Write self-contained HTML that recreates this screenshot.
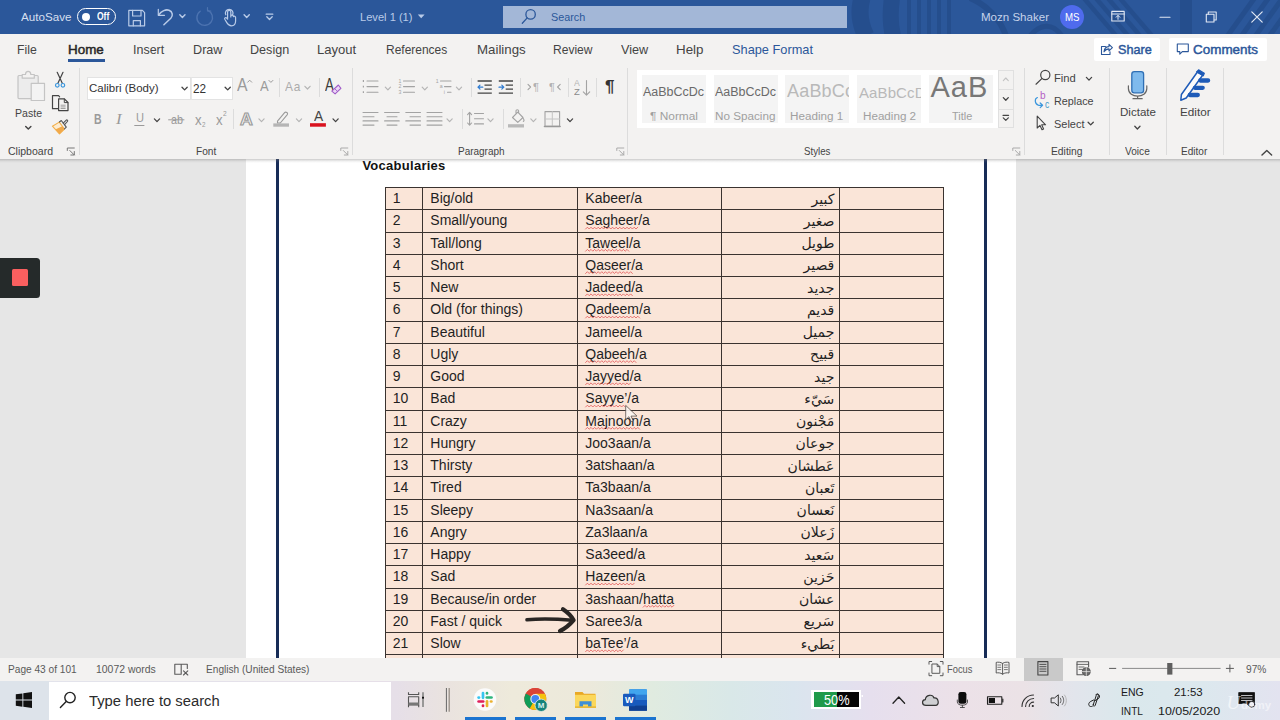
<!DOCTYPE html>
<html lang="en">
<head>
<meta charset="utf-8">
<title>Level 1 (1) - Word</title>
<style>
*{box-sizing:border-box;margin:0;padding:0}
html,body{width:1280px;height:720px;overflow:hidden;background:#e6e6e6;font-family:"Liberation Sans",sans-serif;color:#333}
.abs{position:absolute}
.t{position:absolute;white-space:nowrap;transform-origin:0 50%;display:block}
#titlebar{position:absolute;left:0;top:0;width:1280px;height:34px;background:#2b579a;overflow:hidden}
#tabs{position:absolute;left:0;top:34px;width:1280px;height:32px;background:#f3f2f1}
#ribbon{position:absolute;left:0;top:66px;width:1280px;height:93px;background:#f3f2f1}
#ribshadow{position:absolute;left:0;top:158.5px;width:1280px;height:4px;background:linear-gradient(rgba(120,120,120,.38),rgba(140,140,140,.12) 55%,rgba(160,160,160,0));z-index:3}
#doc{position:absolute;left:0;top:159px;width:1280px;height:499px;background:#e6e6e6;overflow:hidden}
#page{position:absolute;left:246px;top:0;width:770px;height:499px;background:#fff}
#status{position:absolute;left:0;top:658px;width:1280px;height:23px;background:#f3f2f1}
#taskbar{position:absolute;left:0;top:680.5px;width:1280px;height:39.5px;background:linear-gradient(90deg,#e2e4ec 0%,#e6dfe8 31%,#eae3df 35%,#eeeadb 40%,#ece9db 46%,#e0ebe0 51%,#d9e8e8 57%,#dae5ee 62%,#e6dfee 68%,#ece1e8 75%,#ebe2e6 80%,#e2e5ec 84%,#dae8ec 88%,#dce8ee 94%,#e3e3f0 100%)}
.box{position:absolute;background:#fff}
.sty{position:absolute;top:75px;width:64px;height:48px;background:#f4f4f4;overflow:hidden}
.sep{position:absolute;width:1px;background:#dcdcdc}
table{position:absolute;left:138.8px;top:28px;border-collapse:collapse;font-size:14px;color:#1f1f1f;table-layout:fixed}
td{border:1px solid #3a3330;background:#fae5d8;height:22.25px;padding:0 0 1px 7px;white-space:nowrap;overflow:hidden;line-height:20px}
td.ar{font-family:"Liberation Sans","DejaVu Sans",sans-serif;direction:rtl;text-align:right;padding:0 5px 0 0;font-size:14px}
.sq{display:inline}
#ico{position:absolute;left:0;top:0;width:1280px;height:720px;z-index:5;pointer-events:none}
#texts{position:absolute;left:0;top:0;width:1280px;height:720px;z-index:4}
</style>
</head>
<body>
<div id="titlebar">
<svg class="abs" style="left:840px;top:0" width="440" height="34" viewBox="840 0 440 34">
<g fill="none" stroke="#254d8b" opacity=".85">
<path d="M862 -2 C858 12 860 24 866 36" stroke-width="17"/>
<path d="M892 -2 C890 12 890 24 893 36" stroke-width="16"/>
<path d="M909 -2 V36 M919 -2 V36 M929 -2 V36 M939 -2 V36 M949 -2 V36" stroke-width="4"/>
<path d="M970 -2 C985 4 1000 18 1006 36" stroke-width="6"/>
<path d="M1030 36 C1040 24 1052 22 1062 36" stroke-width="5"/>
<path d="M1082 -4 L1118 38 M1094 -4 L1130 38 M1106 -4 L1142 38 M1118 -4 L1154 38" stroke-width="4.500"/>
<path d="M1186 -2 V36" stroke-width="12"/>
<path d="M1226 38 L1256 -4 M1240 38 L1270 -4 M1254 38 L1284 -4 M1268 38 L1298 -4" stroke-width="5"/>
</g>
</svg>
<div class="abs" style="left:502.5px;top:6px;width:344.5px;height:22px;background:#a3b7d7"></div>
<div class="abs" style="left:1060px;top:5px;width:24px;height:24px;border-radius:12px;background:#4f6bed"></div>
<div class="abs" style="left:77px;top:8px;width:38.5px;height:17px;border-radius:9px;border:1.3px solid #fff"></div>
<div class="abs" style="left:81.5px;top:12.5px;width:8px;height:8px;border-radius:4px;background:#fff"></div>
</div>
<div id="tabs">
<div class="abs" style="left:67.5px;top:24.7px;width:37.5px;height:3px;background:#2b579a"></div>
<div class="box" style="left:1094px;top:3.5px;width:66px;height:23px;border-radius:2px"></div>
<div class="box" style="left:1169px;top:3.5px;width:98px;height:23px;border-radius:2px"></div>
</div>
<div id="ribbon"></div>
<!-- ribbon boxes in page coordinates -->
<div class="box" style="left:86.5px;top:76.5px;width:104px;height:23px;border:1px solid #e3e3e3"></div>
<div class="box" style="left:190.5px;top:76.5px;width:42.5px;height:23px;border:1px solid #e3e3e3;border-left:1px solid #e8e8e8"></div>
<div class="box" style="left:636.5px;top:69.5px;width:361.5px;height:58.5px"></div>
<div class="sty" style="left:642px"></div>
<div class="sty" style="left:713.5px"></div>
<div class="sty" style="left:785px"><span class="abs" style="left:2px;top:6px;font-size:18px;color:#b9b9b9;white-space:nowrap;letter-spacing:.2px">AaBbCcD</span></div>
<div class="sty" style="left:857px"><span class="abs" style="left:2px;top:8.6px;font-size:15px;color:#b9b9b9;white-space:nowrap;letter-spacing:.1px">AaBbCcDd</span></div>
<div class="sty" style="left:929px"><span class="abs" style="left:1.5px;top:-4.2px;font-size:29px;color:#777;white-space:nowrap;letter-spacing:1px">AaB</span></div>
<div class="abs" style="left:998px;top:69.5px;width:15.5px;height:58.5px;background:#f3f2f1;border:1px solid #e0e0e0"></div>
<div class="abs" style="left:998px;top:89px;width:15.5px;height:1px;background:#e0e0e0"></div>
<div class="abs" style="left:998px;top:108.5px;width:15.5px;height:1px;background:#e0e0e0"></div>
<div class="sep" style="left:78.5px;top:68px;height:87px"></div>
<div class="sep" style="left:351.5px;top:68px;height:87px"></div>
<div class="sep" style="left:627px;top:68px;height:87px"></div>
<div class="sep" style="left:1023.5px;top:68px;height:87px"></div>
<div class="sep" style="left:1108.8px;top:68px;height:87px"></div>
<div class="sep" style="left:1166.3px;top:68px;height:87px"></div>
<div class="sep" style="left:1223px;top:68px;height:87px"></div>
<div class="sep" style="left:278.6px;top:78px;height:19px"></div>
<div class="sep" style="left:319px;top:78px;height:19px"></div>
<div class="sep" style="left:232.7px;top:109px;height:20px"></div>
<div class="sep" style="left:471.4px;top:78px;height:19px"></div>
<div class="sep" style="left:519.6px;top:78px;height:19px"></div>
<div class="sep" style="left:568.4px;top:78px;height:19px"></div>
<div class="sep" style="left:596px;top:78px;height:19px"></div>
<div class="sep" style="left:461.6px;top:109px;height:20px"></div>
<div class="sep" style="left:502.5px;top:109px;height:20px"></div>
<div id="ribshadow"></div>
<div id="status">
<div class="abs" style="left:1023.5px;top:0;width:39.7px;height:23px;background:#c9c9c9"></div>
</div>
<div id="taskbar">
<div class="abs" style="left:0;top:0;width:48.5px;height:39px;background:#dde3ea"></div>
<div class="abs" style="left:48.7px;top:1px;width:342.5px;height:38px;background:#fff"></div>
<div class="abs" style="left:465px;top:36.5px;width:40.7px;height:3px;background:#1b74d0"></div>
<div class="abs" style="left:515px;top:36.5px;width:40.7px;height:3px;background:#1b74d0"></div>
<div class="abs" style="left:565px;top:36.5px;width:40.7px;height:3px;background:#1b74d0"></div>
<div class="abs" style="left:615px;top:36.5px;width:40.7px;height:3px;background:#1b74d0"></div>
<div class="abs" style="left:811.3px;top:9.3px;width:50px;height:19.5px;background:#fff"></div>
<div class="abs" style="left:813.5px;top:11.3px;width:23.3px;height:15.5px;background:#1f9a4a"></div>
<div class="abs" style="left:836.8px;top:11.3px;width:22px;height:15.5px;background:#050505"></div>
</div>

<div id="texts">
<span class="t" style="left:20.75px;top:9.55px;font-size:11.33px;line-height:15px;color:#d5dfef;transform:scaleX(1.0280);">AutoSave</span>
<span class="t" style="left:97.00px;top:9.60px;font-size:10.4px;line-height:14px;color:#ffffff;transform:scaleX(0.8158);font-weight:bold">Off</span>
<span class="t" style="left:359.50px;top:9.55px;font-size:11.33px;line-height:15px;color:#b9cbe8;transform:scaleX(0.9807);">Level 1 (1)</span>
<span class="t" style="left:551.25px;top:10.05px;font-size:11.33px;line-height:15px;color:#2b579a;transform:scaleX(0.9539);">Search</span>
<span class="t" style="left:980.75px;top:10.05px;font-size:11.33px;line-height:15px;color:#c6d3ea;transform:scaleX(1.0187);">Mozn Shaker</span>
<span class="t" style="left:1065.00px;top:10.05px;font-size:11.5px;line-height:15px;color:#ffffff;transform:scaleX(0.8406);">MS</span>
<span class="t" style="left:17.00px;top:41.90px;font-size:12.66px;line-height:16px;color:#444444;transform:scaleX(0.9678);">File</span>
<span class="t" style="left:132.50px;top:41.90px;font-size:12.66px;line-height:16px;color:#444444;transform:scaleX(0.9872);">Insert</span>
<span class="t" style="left:192.50px;top:41.90px;font-size:12.66px;line-height:16px;color:#444444;transform:scaleX(0.9984);">Draw</span>
<span class="t" style="left:250.00px;top:41.90px;font-size:12.66px;line-height:16px;color:#444444;transform:scaleX(0.9960);">Design</span>
<span class="t" style="left:317.00px;top:41.90px;font-size:12.66px;line-height:16px;color:#444444;transform:scaleX(1.0329);">Layout</span>
<span class="t" style="left:385.50px;top:41.90px;font-size:12.66px;line-height:16px;color:#444444;transform:scaleX(0.9462);">References</span>
<span class="t" style="left:476.75px;top:41.90px;font-size:12.66px;line-height:16px;color:#444444;transform:scaleX(1.0498);">Mailings</span>
<span class="t" style="left:553.00px;top:41.90px;font-size:12.66px;line-height:16px;color:#444444;transform:scaleX(0.9518);">Review</span>
<span class="t" style="left:620.75px;top:41.90px;font-size:12.66px;line-height:16px;color:#444444;transform:scaleX(1.0011);">View</span>
<span class="t" style="left:676.00px;top:41.90px;font-size:12.66px;line-height:16px;color:#444444;transform:scaleX(1.0564);">Help</span>
<span class="t" style="left:68.00px;top:41.90px;font-size:12.66px;line-height:16px;color:#262626;transform:scaleX(1.0588);-webkit-text-stroke:.45px #262626">Home</span>
<span class="t" style="left:731.50px;top:41.90px;font-size:12.66px;line-height:16px;color:#2b579a;transform:scaleX(1.0099);">Shape Format</span>
<span class="t" style="left:1117.50px;top:41.90px;font-size:12.66px;line-height:16px;color:#2b579a;transform:scaleX(0.9991);-webkit-text-stroke:.45px #2b579a">Share</span>
<span class="t" style="left:1193.00px;top:41.90px;font-size:12.66px;line-height:16px;color:#2b579a;transform:scaleX(1.0623);-webkit-text-stroke:.45px #2b579a">Comments</span>
<span class="t" style="left:15.20px;top:105.55px;font-size:11.2px;line-height:15px;color:#444444;transform:scaleX(0.9437);">Paste</span>
<span class="t" style="left:8.00px;top:144.85px;font-size:10.13px;line-height:13px;color:#444444;transform:scaleX(1.0382);">Clipboard</span>
<span class="t" style="left:88.75px;top:81.05px;font-size:11.2px;line-height:15px;color:#333333;transform:scaleX(1.0263);">Calibri (Body)</span>
<span class="t" style="left:192.70px;top:80.55px;font-size:12.5px;line-height:16px;color:#333333;transform:scaleX(0.9420);">22</span>
<span class="t" style="left:196.40px;top:144.85px;font-size:10.13px;line-height:13px;color:#444444;transform:scaleX(1.0017);">Font</span>
<span class="t" style="left:457.60px;top:144.85px;font-size:10.13px;line-height:13px;color:#444444;transform:scaleX(0.9853);">Paragraph</span>
<span class="t" style="left:804.00px;top:144.85px;font-size:10.13px;line-height:13px;color:#444444;transform:scaleX(0.9573);">Styles</span>
<span class="t" style="left:1050.50px;top:144.85px;font-size:10.13px;line-height:13px;color:#444444;transform:scaleX(1.0172);">Editing</span>
<span class="t" style="left:1124.60px;top:144.85px;font-size:10.13px;line-height:13px;color:#444444;transform:scaleX(1.0008);">Voice</span>
<span class="t" style="left:1181.00px;top:144.85px;font-size:10.13px;line-height:13px;color:#444444;transform:scaleX(0.9942);">Editor</span>
<span class="t" style="left:1053.50px;top:71.25px;font-size:11.2px;line-height:15px;color:#444444;transform:scaleX(1.0016);">Find</span>
<span class="t" style="left:1053.50px;top:94.25px;font-size:11.2px;line-height:15px;color:#444444;transform:scaleX(0.9623);">Replace</span>
<span class="t" style="left:1053.50px;top:117.05px;font-size:11.2px;line-height:15px;color:#444444;transform:scaleX(0.9809);">Select</span>
<span class="t" style="left:1119.70px;top:105.45px;font-size:11.2px;line-height:15px;color:#444444;transform:scaleX(1.0336);">Dictate</span>
<span class="t" style="left:1180.00px;top:104.85px;font-size:11.2px;line-height:15px;color:#444444;transform:scaleX(1.0467);">Editor</span>
<span class="t" style="left:93.60px;top:109.70px;font-size:14px;line-height:18px;color:#9a9a9a;transform:scaleX(0.7506);font-weight:bold">B</span>
<span class="t" style="left:116.00px;top:108.70px;font-size:15px;line-height:20px;color:#9a9a9a;transform:scaleX(1.1200);font-style:italic;font-family:'Liberation Serif',serif">I</span>
<span class="t" style="left:135.50px;top:109.20px;font-size:13.5px;line-height:18px;color:#9a9a9a;transform:scaleX(0.8205);">U</span>
<span class="t" style="left:170.50px;top:111.00px;font-size:13px;line-height:17px;color:#9a9a9a;transform:scaleX(0.8294);">ab</span>
<span class="t" style="left:194.90px;top:110.50px;font-size:14px;line-height:18px;color:#9a9a9a;transform:scaleX(0.9429);">x</span>
<span class="t" style="left:202.30px;top:119.50px;font-size:7px;line-height:9px;color:#9a9a9a;transform:scaleX(0.8960);">2</span>
<span class="t" style="left:215.60px;top:110.50px;font-size:14px;line-height:18px;color:#9a9a9a;transform:scaleX(0.9429);">x</span>
<span class="t" style="left:223.30px;top:109.00px;font-size:7px;line-height:9px;color:#9a9a9a;transform:scaleX(0.9472);">2</span>
<span class="t" style="left:237.20px;top:73.75px;font-size:17.7px;line-height:23px;color:#9a9a9a;transform:scaleX(0.8931);">A</span>
<span class="t" style="left:260.10px;top:76.90px;font-size:14.4px;line-height:19px;color:#9a9a9a;transform:scaleX(0.9002);">A</span>
<span class="t" style="left:285.00px;top:79.10px;font-size:12.6px;line-height:16px;color:#ababab;transform:scaleX(0.9422);letter-spacing:1px">Aa</span>
<span class="t" style="left:325.30px;top:73.75px;font-size:17.7px;line-height:23px;color:#3b3b3b;transform:scaleX(0.7534);">A</span>
<span class="t" style="left:313.60px;top:107.35px;font-size:14.4px;line-height:19px;color:#444444;transform:scaleX(0.9522);">A</span>
<span class="t" style="left:240.20px;top:107.60px;font-size:17.2px;line-height:22px;color:#f3f2f1;transform:scaleX(1.0304);-webkit-text-stroke:1.1px #9a9a9a;font-weight:bold">A</span>
<span class="t" style="left:533.00px;top:80.20px;font-size:11px;line-height:14px;color:#b0b0b0;transform:scaleX(1.0132);">¶</span>
<span class="t" style="left:549.00px;top:80.20px;font-size:11px;line-height:14px;color:#b0b0b0;transform:scaleX(0.9794);">¶</span>
<span class="t" style="left:574.20px;top:76.70px;font-size:9px;line-height:12px;color:#b5b5b5;transform:scaleX(0.9642);">A</span>
<span class="t" style="left:574.20px;top:85.70px;font-size:9px;line-height:12px;color:#8a8a8a;transform:scaleX(1.0545);">Z</span>
<span class="t" style="left:604.50px;top:76.00px;font-size:17px;line-height:22px;color:#333333;transform:scaleX(1.0033);font-weight:bold">¶</span>
<span class="t" style="left:1040.40px;top:89.10px;font-size:10px;line-height:13px;color:#b560c4;transform:scaleX(1.0067);">b</span>
<span class="t" style="left:1044.70px;top:97.90px;font-size:10px;line-height:13px;color:#3a96c8;transform:scaleX(0.8400);">c</span>
<span class="t" style="left:643.00px;top:83.85px;font-size:12.47px;line-height:16px;color:#6a6a6a;transform:scaleX(1.0003);">AaBbCcDc</span>
<span class="t" style="left:649.50px;top:108.45px;font-size:11.67px;line-height:15px;color:#a0a0a0;transform:scaleX(1.0196);">¶ Normal</span>
<span class="t" style="left:715.00px;top:83.85px;font-size:12.47px;line-height:16px;color:#6a6a6a;transform:scaleX(1.0003);">AaBbCcDc</span>
<span class="t" style="left:715.00px;top:108.45px;font-size:11.67px;line-height:15px;color:#a0a0a0;transform:scaleX(1.0022);">No Spacing</span>
<span class="t" style="left:790.40px;top:108.45px;font-size:11.67px;line-height:15px;color:#a0a0a0;transform:scaleX(1.0008);">Heading 1</span>
<span class="t" style="left:862.50px;top:108.45px;font-size:11.67px;line-height:15px;color:#a0a0a0;transform:scaleX(0.9989);">Heading 2</span>
<span class="t" style="left:951.50px;top:108.45px;font-size:11.67px;line-height:15px;color:#a0a0a0;transform:scaleX(0.9355);">Title</span>
<span class="t" style="left:7.50px;top:662.80px;font-size:10.13px;line-height:13px;color:#5a5a5a;transform:scaleX(1.0009);">Page 43 of 101</span>
<span class="t" style="left:95.75px;top:662.80px;font-size:10.13px;line-height:13px;color:#5a5a5a;transform:scaleX(1.0305);">10072 words</span>
<span class="t" style="left:205.50px;top:662.80px;font-size:10.13px;line-height:13px;color:#5a5a5a;transform:scaleX(0.9994);">English (United States)</span>
<span class="t" style="left:946.50px;top:662.80px;font-size:10.13px;line-height:13px;color:#5a5a5a;transform:scaleX(0.9210);">Focus</span>
<span class="t" style="left:1246.00px;top:662.80px;font-size:10.13px;line-height:13px;color:#5a5a5a;transform:scaleX(1.0066);">97%</span>
<span class="t" style="left:88.75px;top:691.75px;font-size:14.79px;line-height:19px;color:#2b2b2b;transform:scaleX(1.0007);">Type here to search</span>
<span class="t" style="left:823.70px;top:691.20px;font-size:14px;line-height:18px;color:#ffffff;transform:scaleX(0.9133);">50%</span>
<span class="t" style="left:1121.30px;top:685.20px;font-size:10.95px;line-height:14px;color:#1a1a1a;transform:scaleX(0.9577);">ENG</span>
<span class="t" style="left:1121.30px;top:703.50px;font-size:10.95px;line-height:14px;color:#1a1a1a;transform:scaleX(0.9281);">INTL</span>
<span class="t" style="left:1174.00px;top:685.00px;font-size:10.95px;line-height:14px;color:#1a1a1a;transform:scaleX(1.0447);">21:53</span>
<span class="t" style="left:1158.00px;top:703.50px;font-size:10.95px;line-height:14px;color:#1a1a1a;transform:scaleX(1.1361);">10/05/2020</span>
</div>
<div id="doc">
<div id="page">
<div class="abs" style="left:30px;top:0;width:3px;height:499px;background:#172c57"></div>
<div class="abs" style="left:738px;top:0;width:3px;height:499px;background:#172c57"></div>
<div class="abs" style="left:116.4px;top:-1.7px;font-size:13px;letter-spacing:.27px;font-weight:bold;color:#111;line-height:18px">Vocabularies</div>
<table>
<colgroup><col style="width:37.5px"><col style="width:155px"><col style="width:144px"><col style="width:118px"><col style="width:104px"></colgroup>
<tr><td>1</td><td>Big/old</td><td>Kabeer/a</td><td class="ar">كبير</td><td></td></tr>
<tr><td>2</td><td>Small/young</td><td><span class="sq">Sagheer</span>/a</td><td class="ar">صغير</td><td></td></tr>
<tr><td>3</td><td>Tall/long</td><td><span class="sq">Taweel</span>/a</td><td class="ar">طويل</td><td></td></tr>
<tr><td>4</td><td>Short</td><td><span class="sq">Qaseer</span>/a</td><td class="ar">قصير</td><td></td></tr>
<tr><td>5</td><td>New</td><td><span class="sq">Jadeed</span>/a</td><td class="ar">جديد</td><td></td></tr>
<tr><td>6</td><td>Old (for things)</td><td><span class="sq">Qadeem</span>/a</td><td class="ar">قديم</td><td></td></tr>
<tr><td>7</td><td>Beautiful</td><td>Jameel/a</td><td class="ar">جميل</td><td></td></tr>
<tr><td>8</td><td>Ugly</td><td><span class="sq">Qabeeh</span>/a</td><td class="ar">قبيح</td><td></td></tr>
<tr><td>9</td><td>Good</td><td><span class="sq">Jayyed</span>/a</td><td class="ar">جيد</td><td></td></tr>
<tr><td>10</td><td>Bad</td><td><span class="sq">Sayye</span>’/a</td><td class="ar">سَيّء</td><td></td></tr>
<tr><td>11</td><td>Crazy</td><td><span class="sq">Majnoon</span>/a</td><td class="ar">مَجْنون</td><td></td></tr>
<tr><td>12</td><td>Hungry</td><td>Joo3aan/a</td><td class="ar">جوعان</td><td></td></tr>
<tr><td>13</td><td>Thirsty</td><td>3atshaan/a</td><td class="ar">عَطشان</td><td></td></tr>
<tr><td>14</td><td>Tired</td><td>Ta3baan/a</td><td class="ar">تَعبان</td><td></td></tr>
<tr><td>15</td><td>Sleepy</td><td>Na3saan/a</td><td class="ar">نَعسان</td><td></td></tr>
<tr><td>16</td><td>Angry</td><td>Za3laan/a</td><td class="ar">زَعلان</td><td></td></tr>
<tr><td>17</td><td>Happy</td><td>Sa3eed/a</td><td class="ar">سَعيد</td><td></td></tr>
<tr><td>18</td><td>Sad</td><td><span class="sq">Hazeen</span>/a</td><td class="ar">حَزين</td><td></td></tr>
<tr><td>19</td><td>Because/in order</td><td>3ashaan/<span class="sq">hatta</span></td><td class="ar">عشان</td><td></td></tr>
<tr><td>20</td><td>Fast / quick</td><td>Saree3/a</td><td class="ar">سَريع</td><td></td></tr>
<tr><td>21</td><td>Slow</td><td><span class="sq">baTee</span>’/a</td><td class="ar">بَطيء</td><td></td></tr>
<tr><td>&nbsp;</td><td></td><td></td><td class="ar"></td><td></td></tr>
</table>
</div>
<div class="abs" style="left:0;top:99px;width:39.8px;height:40px;background:#252a2a;border-radius:0 3.5px 3.5px 0"></div>
<div class="abs" style="left:12px;top:110.4px;width:16px;height:16.4px;background:#f95f5f;border-radius:1.5px"></div>
</div>

<svg id="ico" width="1280" height="720" viewBox="0 0 1280 720" fill="none" stroke-linecap="round" stroke-linejoin="round">
<defs>
<path id="chv" d="M-2.6 -1.4 L0 1.3 L2.6 -1.4"/>
<path id="launch" d="M0 2.5 V0 H7 M7 7 L2.5 2.5 M7 3.5 V7 H3.5" />
</defs>
<!-- ============ title bar ============ -->
<g stroke="#b9cbe8" stroke-width="1.2">
<!-- save -->
<path d="M128.8 10.4 H142.4 L144.6 12.6 V25.8 H128.8 Z"/>
<path d="M132.6 10.4 V16 H141 V10.4"/>
<path d="M133.3 25.8 V20.6 H140.4 V25.8"/>
<!-- undo -->
<path d="M158.3 9.3 V15.3 H164.5"/>
<path d="M158.6 15 C161.5 10.6 166 9.2 169 10.2 C172.8 11.6 173.2 15.6 170.8 18.3 L163.9 24.8" stroke-width="1.5"/>
<use href="#chv" x="182.4" y="16.2" stroke-width="1.4"/>
<!-- touch -->
<path d="M227.6 18.5 V12 a1.6 1.6 0 0 1 3.2 0 V17 M230.8 15.8 a1.4 1.4 0 0 1 2.6 0.6 M233.4 16.6 a1.3 1.3 0 0 1 2.2 .9 V21 c0 3 -1.600 4.800 -4.200 4.800 c-2.400 0 -3.300 -1 -4.600 -3.200 l-2 -3.300 c-.7 -1.300 1 -2.300 2 -1.100 l.8 1"/>
<path d="M225.8 14.800 a3.800 3.800 0 1 1 6.800 0" />
<use href="#chv" x="246.7" y="16.2" stroke-width="1.4"/>
<!-- customize -->
<path d="M266.2 14.2 H272.8" stroke-width="1.3"/>
<path d="M266.8 16.8 L269.5 19.5 L272.2 16.8" stroke-width="1.3"/>
</g>
<!-- redo (disabled) -->
<path d="M207.800 10.400 A7.800 7.800 0 1 1 200.200 11.200" stroke="#4c73b0" stroke-width="1.4"/>
<path d="M207.500 7.600 V11 H210.800" stroke="#4c73b0" stroke-width="1.200"/>
<!-- title dropdown -->
<path d="M417.800 14.600 H424.600 L421.200 18.200 Z" fill="#b9cbe8" stroke="none"/>
<!-- search magnifier -->
<g stroke="#2b579a" stroke-width="1.3"><circle cx="530.6" cy="14.400" r="4.700"/><path d="M527.2 17.900 L522.300 23.200"/></g>
<!-- window controls -->
<g stroke="#e1e8f4" stroke-width="1.100">
<rect x="1111.800" y="11.400" width="12.400" height="9.600"/>
<path d="M1111.800 14 H1124.200" />
<path d="M1118 19.300 V15.600 M1116.200 17.200 L1118 15.400 L1119.800 17.200" stroke-width="1"/>
<path d="M1160 17.200 H1170"/>
<path d="M1206.300 14.200 H1214 V22 H1206.300 Z"/>
<path d="M1208.300 14 V12 H1216.200 V20 H1214.200"/>
<path d="M1251.800 11.800 L1262.200 22.200 M1262.200 11.800 L1251.800 22.200" stroke-width="1.200"/>
</g>
<!-- ============ share / comments ============ -->
<g stroke="#2b579a" stroke-width="1.100">
<path d="M1105.500 46.500 H1101.500 V54.500 H1110 V51.800"/>
<path d="M1104 51.800 C1104.300 48.300 1106.500 46.600 1109 46.600 V44.400 L1112.400 47.700 L1109 50.900 V48.900 C1106.800 48.900 1105.300 49.800 1104 51.800 Z"/>
<path d="M1177.300 44 H1188.300 V51.600 H1182.300 L1179.800 54.100 V51.600 H1177.300 Z"/>
</g>
<!-- ============ clipboard group ============ -->
<g stroke="#c4c4c4" stroke-width="1.200">
<rect x="18" y="75.500" width="20.200" height="23.100" rx="1" fill="#ececec"/>
<path d="M22.200 78.200 V74.500 H25.500 C25.500 70.300 30.800 70.300 30.800 74.500 H34.300 V78.200 Z" fill="#f3f2f1"/>
<rect x="31.200" y="83.300" width="13.300" height="17.200" fill="#f3f3f3"/>
</g>
<use href="#chv" x="28.300" y="127.800" stroke="#444" stroke-width="1.400"/>
<!-- scissors -->
<g stroke-width="1.200">
<path d="M57.200 72.300 L62.300 83.300 M63 72.300 L57.900 83.300" stroke="#444"/>
<circle cx="57.300" cy="85.300" r="1.800" stroke="#3a96dd"/><circle cx="62.900" cy="85.300" r="1.800" stroke="#3a96dd"/>
</g>
<!-- copy -->
<g stroke="#444" stroke-width="1.200">
<path d="M57.800 108.700 H52.500 V95.700 H58.600 L59.600 96.800"/>
<path d="M58.600 98.800 H64.400 L68 102.500 V110.600 H58.600 Z"/>
<path d="M64.300 99 V102.600 H67.800" stroke-width="1"/>
<path d="M61 105.200 H65.200 M61 106.900 H65.200 M61 108.500 H65.200" stroke="#8a8a8a" stroke-width=".8"/>
</g>
<!-- format painter -->
<path d="M52.400 126.200 L59.300 122.100 L64.400 129 L59.500 133.900 Z" fill="#fdecd0" stroke="#f2b04a" stroke-width="1.100"/>
<path d="M55.300 129.600 L62.300 126.200 L64.400 129 L59.500 133.900 Z" fill="#f1a94a" stroke="none"/>
<path d="M59.400 122 L61.300 120.500 L66.300 127.200 L64.500 128.800" stroke="#555" stroke-width="1.100"/>
<path d="M63.200 123.200 L66 120.300 C67 119.300 68.300 120.500 67.400 121.500 L64.600 124.600" stroke="#555" stroke-width="1.100"/>
<!-- launchers -->
<g stroke="#777" stroke-width="1">
<use href="#launch" x="67.300" y="148"/>
<use href="#launch" x="340.800" y="148" stroke="#aaa"/>
<use href="#launch" x="616.800" y="148" stroke="#aaa"/>
<use href="#launch" x="1012.800" y="148" stroke="#aaa"/>
</g>
<!-- ============ font group ============ -->
<use href="#chv" x="184.600" y="88.600" stroke="#444" stroke-width="1.300"/>
<use href="#chv" x="227.700" y="88.600" stroke="#444" stroke-width="1.300"/>
<g stroke="#9a9a9a" stroke-width="1">
<path d="M247.700 82.200 L249.700 80.200 L251.700 82.200"/>
<path d="M268.900 80.400 L270.900 82.400 L272.900 80.400"/>
</g>
<use href="#chv" x="307.500" y="87.700" stroke="#b5b5b5" stroke-width="1.200"/>
<!-- eraser -->
<path d="M331.800 91.100 L338.400 85 L340.900 88.300 L335.100 93.900 Z" stroke="#a05cc8" stroke-width="1.100" fill="#ecd9f5"/>
<path d="M334.600 88.600 L337.600 91.500" stroke="#a05cc8" stroke-width=".9"/>
<!-- underline of U -->
<path d="M134.700 125.500 H144" stroke="#9a9a9a" stroke-width="1"/>
<use href="#chv" x="157" y="120.300" stroke="#444" stroke-width="1.300"/>
<path d="M168.600 119.800 H184" stroke="#9a9a9a" stroke-width="1"/>
<!-- text effects A (glyph is real text) -->
<use href="#chv" x="261.500" y="120.300" stroke="#b5b5b5" stroke-width="1.200"/>
<!-- highlighter -->
<path d="M277.500 121.200 L284.600 112.600 C285.800 111.200 288.400 113.200 287.300 114.600 L280.300 123 H277.500 Z" stroke="#9a9a9a" stroke-width="1.100"/>
<rect x="273.300" y="123.400" width="15.700" height="3.300" fill="#b5b5b5" stroke="none"/>
<use href="#chv" x="299" y="120.300" stroke="#b5b5b5" stroke-width="1.200"/>
<!-- font colour bar -->
<rect x="310" y="123.200" width="15.900" height="3.500" fill="#d9121f" stroke="none"/>
<use href="#chv" x="335.600" y="120.300" stroke="#444" stroke-width="1.300"/>
<!-- ============ paragraph group ============ -->
<g stroke="#a3a3a3" stroke-width="1.100">
<!-- bullets -->
<path d="M367 81 H378 M367 86.600 H378 M367 92.200 H378"/>
<path d="M362.800 81 h1.200 M362.800 86.600 h1.200 M362.800 92.200 h1.200" stroke-width="1.800" stroke-linecap="butt"/>
<!-- numbering -->
<path d="M403.500 81 H414.500 M403.500 86.600 H414.500 M403.500 92.200 H414.500"/>
<g font-family="Liberation Sans, sans-serif" font-size="5.200" fill="#a3a3a3" stroke="none"><text x="398.600" y="82.800">1</text><text x="398.600" y="88.400">2</text><text x="398.600" y="94">3</text></g>
<!-- multilevel -->
<path d="M440.500 81 H451 M444.500 86.600 H451 M447.500 92.200 H451"/>
<g font-family="Liberation Sans, sans-serif" font-size="5.200" fill="#a3a3a3" stroke="none"><text x="435.800" y="82.800">1</text><text x="439.800" y="88.400">a</text><text x="443.800" y="94">i</text></g>
<!-- align -->
<path d="M363 112.500 H378 M363 116.700 H374 M363 120.900 H378 M363 125.100 H374"/>
<path d="M384.600 112.500 H399.200 M387 116.700 H397 M384.600 120.900 H399.200 M387 125.100 H397"/>
<path d="M405.800 112.500 H420.500 M410 116.700 H420.500 M405.800 120.900 H420.500 M410 125.100 H420.500"/>
<path d="M427 112.500 H442 M427 116.700 H442 M427 120.900 H442 M427 125.100 H442"/>
<!-- line spacing -->
<path d="M474.500 113.500 H483.500 M474.500 118.700 H483.500 M474.500 123.900 H483.500"/>
<path d="M469.600 112.600 V125 M467.600 114.600 L469.600 112.400 L471.600 114.600 M467.600 123 L469.600 125.200 L471.600 123"/>
<!-- ltr / rtl / sort -->
<path d="M528 84.400 L530.600 87 L528 89.600"/>
<path d="M560.200 84.400 L557.600 87 L560.200 89.600"/>
<path d="M586.500 80.500 V95 M583.300 91.800 L586.500 95.200 L589.700 91.800"/>
<!-- shading bucket -->
<path d="M512.500 117.500 L517.800 112.200 L523 117.500 L517.800 122.300 Z M516 114 V110.800 C516 109.400 518.600 109.400 518.600 110.800 V113"/>
<path d="M523.300 118.500 C524.300 120 524.300 121 523.300 121.400"/>
<!-- borders -->
<path d="M545 111.600 H559.600 V126.400 H545 Z"/>
<path d="M552.300 111.600 V126.400 M545 119 H559.600" stroke="#c4c4c4" stroke-width="1"/>
<path d="M544.500 126.500 H560.100" stroke="#999" stroke-width="1.600"/>
</g>
<rect x="508" y="124.200" width="16" height="3.300" fill="#b9b9b9" stroke="none"/>
<g stroke="#b5b5b5" stroke-width="1.200">
<use href="#chv" x="387.900" y="88.600"/><use href="#chv" x="424.800" y="88.600"/><use href="#chv" x="459" y="88.600"/>
<use href="#chv" x="449.600" y="120.300"/><use href="#chv" x="490.500" y="120.300"/><use href="#chv" x="533.400" y="120.300"/>
</g>
<use href="#chv" x="570" y="120.300" stroke="#444" stroke-width="1.300"/>
<!-- indent buttons -->
<g stroke="#444" stroke-width="1.300" stroke-linecap="butt">
<path d="M477.600 81 H491.800 M484.500 85.200 H491.800 M484.500 89.200 H491.800 M477.600 93.200 H491.800"/>
<path d="M498.800 81 H513 M505.700 85.200 H513 M505.700 89.200 H513 M498.800 93.200 H513"/>
</g>
<g stroke="#2e7bd1" stroke-width="1.200">
<path d="M478 87.200 H482.800 M480 85.200 L478 87.200 L480 89.200"/>
<path d="M499 87.200 H503.800 M501.800 85.200 L503.800 87.200 L501.800 89.200"/>
</g>
<!-- ============ styles scroll ============ -->
<path d="M1003.300 80.600 L1005.800 78 L1008.300 80.600" stroke="#c2c2c2" stroke-width="1.100"/>
<path d="M1003.300 97.600 L1005.800 100.200 L1008.300 97.600" stroke="#444" stroke-width="1.300"/>
<path d="M1003 115.300 H1008.600 M1003.300 117.800 L1005.800 120.400 L1008.300 117.800" stroke="#444" stroke-width="1.200"/>
<!-- ============ editing ============ -->
<g stroke="#444" stroke-width="1.200">
<circle cx="1045.300" cy="75" r="4.600"/><path d="M1041.800 78.600 L1036 84.200"/>
<use href="#chv" x="1089" y="78.800" stroke-width="1.300"/>
<use href="#chv" x="1090.700" y="123.600" stroke-width="1.300"/>
<path d="M1037.200 116.200 V128 L1040 125.400 L1042 129.800 L1043.600 129 L1041.700 124.800 H1045.600 Z" stroke-width="1.100"/>
</g>
<path d="M1037.400 97.500 C1034.300 98.600 1034.600 104 1038.500 105.300 H1042.300 M1040.200 103 L1042.600 105.300 L1040.200 107.600" stroke="#3a96dd" stroke-width="1.200"/>
<!-- ============ dictate ============ -->
<rect x="1131.800" y="71.600" width="11.800" height="21.200" rx="2.600" fill="#7fbaed" stroke="#2f6fb5" stroke-width="1.300"/>
<path d="M1128.400 85.800 V88.500 C1128.400 98.600 1146.800 98.600 1146.800 88.500 V85.800 M1137.600 96.200 V98.500 M1133 98.700 H1142.200" stroke="#666" stroke-width="1.200"/>
<use href="#chv" x="1137.400" y="127.700" stroke="#444" stroke-width="1.300"/>
<!-- ============ editor ============ -->
<path d="M1197.400 72 L1202.600 75.200 L1186.200 98 L1180.800 100.300 L1181.400 94.500 Z" fill="#fbfbfb" stroke="#1e5bb8" stroke-width="1.500"/>
<path d="M1196.600 71.800 L1198.600 69.800 L1204.300 73.200 L1203.300 75.800 Z" fill="#1e5bb8" stroke="#1e5bb8" stroke-width="1.200"/>
<path d="M1200.300 80.500 H1208.100 M1194.900 87.800 H1202.700 M1189.800 95 H1197.800" stroke="#1e5bb8" stroke-width="4.300"/>
<!-- collapse ribbon -->
<path d="M1262 155 L1266.800 150.400 L1271.600 155" stroke="#444" stroke-width="1.400"/>
<path d="M585.6 229.0 L587.4 227.2 L589.2 229.0 L591.0 227.2 L592.8 229.0 L594.6 227.2 L596.4 229.0 L598.2 227.2 L600.0 229.0 L601.8 227.2 L603.6 229.0 L605.4 227.2 L607.2 229.0 L609.0 227.2 L610.8 229.0 L612.6 227.2 L614.4 229.0 L616.2 227.2 L618.0 229.0 L619.8 227.2 L621.6 229.0 L623.4 227.2 L625.2 229.0 L627.0 227.2 L628.8 229.0 L630.6 227.2 L632.4 229.0 L634.2 227.2 L636.0 229.0 L637.8 227.2 M585.6 251.2 L587.4 249.4 L589.2 251.2 L591.0 249.4 L592.8 251.2 L594.6 249.4 L596.4 251.2 L598.2 249.4 L600.0 251.2 L601.8 249.4 L603.6 251.2 L605.4 249.4 L607.2 251.2 L609.0 249.4 L610.8 251.2 L612.6 249.4 L614.4 251.2 L616.2 249.4 L618.0 251.2 L619.8 249.4 L621.6 251.2 L623.4 249.4 L625.2 251.2 L627.0 249.4 L628.8 251.2 M585.6 273.5 L587.4 271.7 L589.2 273.5 L591.0 271.7 L592.8 273.5 L594.6 271.7 L596.4 273.5 L598.2 271.7 L600.0 273.5 L601.8 271.7 L603.6 273.5 L605.4 271.7 L607.2 273.5 L609.0 271.7 L610.8 273.5 L612.6 271.7 L614.4 273.5 L616.2 271.7 L618.0 273.5 L619.8 271.7 L621.6 273.5 L623.4 271.7 L625.2 273.5 L627.0 271.7 L628.8 273.5 L630.6 271.7 L632.4 273.5 M585.6 295.7 L587.4 293.9 L589.2 295.7 L591.0 293.9 L592.8 295.7 L594.6 293.9 L596.4 295.7 L598.2 293.9 L600.0 295.7 L601.8 293.9 L603.6 295.7 L605.4 293.9 L607.2 295.7 L609.0 293.9 L610.8 295.7 L612.6 293.9 L614.4 295.7 L616.2 293.9 L618.0 295.7 L619.8 293.9 L621.6 295.7 L623.4 293.9 L625.2 295.7 L627.0 293.9 L628.8 295.7 L630.6 293.9 L632.4 295.7 M585.6 318.0 L587.4 316.2 L589.2 318.0 L591.0 316.2 L592.8 318.0 L594.6 316.2 L596.4 318.0 L598.2 316.2 L600.0 318.0 L601.8 316.2 L603.6 318.0 L605.4 316.2 L607.2 318.0 L609.0 316.2 L610.8 318.0 L612.6 316.2 L614.4 318.0 L616.2 316.2 L618.0 318.0 L619.8 316.2 L621.6 318.0 L623.4 316.2 L625.2 318.0 L627.0 316.2 L628.8 318.0 L630.6 316.2 L632.4 318.0 L634.2 316.2 L636.0 318.0 L637.8 316.2 L639.6 318.0 M585.6 362.5 L587.4 360.7 L589.2 362.5 L591.0 360.7 L592.8 362.5 L594.6 360.7 L596.4 362.5 L598.2 360.7 L600.0 362.5 L601.8 360.7 L603.6 362.5 L605.4 360.7 L607.2 362.5 L609.0 360.7 L610.8 362.5 L612.6 360.7 L614.4 362.5 L616.2 360.7 L618.0 362.5 L619.8 360.7 L621.6 362.5 L623.4 360.7 L625.2 362.5 L627.0 360.7 L628.8 362.5 L630.6 360.7 L632.4 362.5 L634.2 360.7 L636.0 362.5 M585.6 384.7 L587.4 382.9 L589.2 384.7 L591.0 382.9 L592.8 384.7 L594.6 382.9 L596.4 384.7 L598.2 382.9 L600.0 384.7 L601.8 382.9 L603.6 384.7 L605.4 382.9 L607.2 384.7 L609.0 382.9 L610.8 384.7 L612.6 382.9 L614.4 384.7 L616.2 382.9 L618.0 384.7 L619.8 382.9 L621.6 384.7 L623.4 382.9 L625.2 384.7 L627.0 382.9 L628.8 384.7 L630.6 382.9 M585.6 407.0 L587.4 405.2 L589.2 407.0 L591.0 405.2 L592.8 407.0 L594.6 405.2 L596.4 407.0 L598.2 405.2 L600.0 407.0 L601.8 405.2 L603.6 407.0 L605.4 405.2 L607.2 407.0 L609.0 405.2 L610.8 407.0 L612.6 405.2 L614.4 407.0 L616.2 405.2 L618.0 407.0 L619.8 405.2 L621.6 407.0 L623.4 405.2 L625.2 407.0 M585.6 429.2 L587.4 427.4 L589.2 429.2 L591.0 427.4 L592.8 429.2 L594.6 427.4 L596.4 429.2 L598.2 427.4 L600.0 429.2 L601.8 427.4 L603.6 429.2 L605.4 427.4 L607.2 429.2 L609.0 427.4 L610.8 429.2 L612.6 427.4 L614.4 429.2 L616.2 427.4 L618.0 429.2 L619.8 427.4 L621.6 429.2 L623.4 427.4 L625.2 429.2 L627.0 427.4 L628.8 429.2 L630.6 427.4 L632.4 429.2 L634.2 427.4 L636.0 429.2 L637.8 427.4 L639.6 429.2 M585.6 585.0 L587.4 583.2 L589.2 585.0 L591.0 583.2 L592.8 585.0 L594.6 583.2 L596.4 585.0 L598.2 583.2 L600.0 585.0 L601.8 583.2 L603.6 585.0 L605.4 583.2 L607.2 585.0 L609.0 583.2 L610.8 585.0 L612.6 583.2 L614.4 585.0 L616.2 583.2 L618.0 585.0 L619.8 583.2 L621.6 585.0 L623.4 583.2 L625.2 585.0 L627.0 583.2 L628.8 585.0 L630.6 583.2 L632.4 585.0 L634.2 583.2 M643.2 607.2 L645.0 605.4 L646.8 607.2 L648.6 605.4 L650.4 607.2 L652.2 605.4 L654.0 607.2 L655.8 605.4 L657.6 607.2 L659.4 605.4 L661.2 607.2 L663.0 605.4 L664.8 607.2 L666.6 605.4 L668.4 607.2 L670.2 605.4 L672.0 607.2 L673.8 605.4 M585.6 651.7 L587.4 649.9 L589.2 651.7 L591.0 649.9 L592.8 651.7 L594.6 649.9 L596.4 651.7 L598.2 649.9 L600.0 651.7 L601.8 649.9 L603.6 651.7 L605.4 649.9 L607.2 651.7 L609.0 649.9 L610.8 651.7 L612.6 649.9 L614.4 651.7 L616.2 649.9 L618.0 651.7 L619.8 649.9 L621.6 651.7 L623.4 649.9" stroke="#e25555" stroke-width=".8" stroke-linejoin="miter" fill="none"/>
<!-- ============ hand-drawn arrow + mouse pointer ============ -->
<path d="M527 619.800 C540 618.400 556 618.800 572.500 620.300" stroke="#2a2624" stroke-width="3.600"/>
<path d="M563 609.200 C568 612.500 571.500 616 573.600 620.200 C570 624.500 565.500 628.500 560 631" stroke="#2a2624" stroke-width="4.200"/>
<path d="M625.700 405.800 V419.700 L628.900 416.700 L631.200 421.700 L633.200 420.800 L631 416.100 H636.600 Z" fill="#fbf6f2" stroke="#4a4440" stroke-width=".8" stroke-linejoin="miter" opacity=".9"/>
<!-- ============ status bar ============ -->
<g stroke="#5a5a5a" stroke-width="1.100">
<path d="M181.200 672.300 V664.300 H187.300 V668.500 M181.200 664.300 H174.800 V674.300 H181.200 V672.300 M183.500 670.800 L187.800 675 M187.800 670.800 L183.500 675"/>
<!-- focus -->
<path d="M929 664.200 V661.500 H931.700 M940.300 661.500 H943 V664.200 M943 673 V675.700 H940.300 M931.700 675.700 H929 V673" stroke-width="1"/>
<path d="M932.300 664 H937.300 L939.800 666.500 V673.300 H932.300 Z M937.200 664.200 V666.600 H939.600" stroke-width="1"/>
<!-- read mode -->
<path d="M1002.600 663.400 C1000.500 662 998 662 996.200 662.400 V673 C998 672.600 1000.500 672.700 1002.600 674.200 C1004.700 672.700 1007.200 672.600 1009 673 V662.400 C1007.200 662 1004.700 662 1002.600 663.400 V674.200" stroke-width="1"/>
<path d="M997.800 665 H1000.800 M997.800 667.300 H1000.800 M997.800 669.600 H1000.800 M1004.400 665 H1007.400 M1004.400 667.300 H1007.400 M1004.400 669.600 H1007.400" stroke-width=".8"/>
<!-- print layout -->
<rect x="1037.900" y="661.600" width="10" height="13.400" stroke="#444" stroke-width="1.100"/>
<path d="M1039.800 664.400 H1046 M1039.800 666.700 H1046 M1039.800 669 H1046 M1039.800 671.300 H1046" stroke="#444" stroke-width=".9"/>
<!-- web layout -->
<path d="M1083 674.800 H1077 V661.800 H1088.600 V667"/>
<path d="M1077 664.400 H1088.600 M1079 667 H1084 M1079 669.400 H1082.500" stroke-width=".9"/>
<circle cx="1086.300" cy="671.600" r="3.900" fill="#6a6a6a"/>
<path d="M1082.400 671.600 H1090.200 M1086.300 667.700 V675.500" stroke="#f3f2f1" stroke-width=".7"/>
<!-- zoom -->
<path d="M1109.500 668.400 H1115.800 M1226.300 668.400 H1233.500 M1229.900 664.800 V672" stroke-width="1"/>
<path d="M1122.500 668.400 H1220.200" stroke="#8a8a8a" stroke-width="1"/>
</g>
<rect x="1167.200" y="663" width="5.200" height="11.600" fill="#5f5f5f"/>
<!-- ============ taskbar ============ -->
<!-- windows logo -->
<path d="M15.800 694.300 L22.400 693.400 V699.600 H15.800 Z M23.300 693.300 L32 692.100 V699.600 H23.300 Z M15.800 700.500 H22.400 V706.700 L15.800 705.800 Z M23.300 700.500 H32 V708 L23.300 706.800 Z" fill="#111" stroke="none"/>
<g stroke="#222" stroke-width="1.400"><circle cx="70" cy="697.600" r="5.200"/><path d="M66.200 701.600 L60.400 707.400"/></g>
<!-- task view -->
<g stroke="#555" stroke-width="1.100" stroke-linecap="butt">
<path d="M408.500 692.200 V694.500 H418.700 V692.200"/>
<rect x="408.500" y="696.800" width="10.200" height="8.200"/>
<path d="M408.500 703.800 H418.700" stroke-width="2.600" stroke="#777"/>
<path d="M408.500 705 V707.200 M418.700 705 V707.200"/>
<path d="M423 692.200 V706.900" stroke="#8a8a8a" stroke-width="1.700"/>
</g>
<rect x="422" y="696.800" width="2" height="1.800" fill="#111" stroke="none"/>
<path d="M446.400 688 V711.800" stroke="#666" stroke-width="1" stroke-linecap="butt"/>
<path d="M449.200 688 V711.800" stroke="#998f88" stroke-width="1.300" stroke-linecap="butt"/>
<!-- slack -->
<circle cx="485" cy="699.500" r="11.300" fill="#fbfbfb" stroke="none"/>
<g stroke-width="2.700" stroke-linecap="round">
<path d="M483 693 V697.800" stroke="#36c5f0"/><path d="M478.600 697.600 H479" stroke="#36c5f0"/>
<path d="M487 701.300 V706" stroke="#ecb22e"/><path d="M491 701.500 H491.400" stroke="#ecb22e"/>
<path d="M486.800 697.500 H491.500" stroke="#2eb67d"/><path d="M487 693.200 V693.500" stroke="#2eb67d"/>
<path d="M478.600 701.500 H483.200" stroke="#e01e5a"/><path d="M483 705.600 V706" stroke="#e01e5a"/>
</g>
<!-- chrome -->
<circle cx="535.300" cy="699" r="11" fill="#db4437" stroke="none"/>
<path d="M535.300 699 L525.800 693.500 A11 11 0 0 0 529.800 708.500 Z" fill="#0f9d58" stroke="none"/>
<path d="M535.300 699 L529.800 708.500 A11 11 0 0 0 544.800 693.500 L535.300 693.500 Z" fill="#f4c20d" stroke="none"/>
<path d="M525.800 693.500 A11 11 0 0 1 544.800 693.500 Z" fill="#db4437" stroke="none"/>
<circle cx="535.300" cy="699" r="5" fill="#f1f1f1" stroke="none"/>
<circle cx="535.300" cy="699" r="3.900" fill="#4285f4" stroke="none"/>
<circle cx="541.200" cy="705.300" r="6.200" fill="#14837c" stroke="#e8ece6" stroke-width=".8"/>
<text x="541.200" y="708.300" font-family="Liberation Sans, sans-serif" font-size="8" font-weight="bold" fill="#d8f0ee" stroke="none" text-anchor="middle">M</text>
<!-- explorer -->
<path d="M575 692 H582.500 L584 693.800 H595.500 V696 H575 Z" fill="#e9a825" stroke="none"/>
<rect x="575" y="694.800" width="21" height="13.200" fill="#fbd75b" stroke="none"/>
<path d="M579.500 708 V701.200 H591.500 V708 H588 V704.500 H583 V708 Z" fill="#3f8fd6" stroke="none"/>
<rect x="575" y="706.300" width="21" height="1.700" fill="#e9b93a" stroke="none"/>
<!-- word -->
<rect x="629" y="689.300" width="18" height="21.500" rx="1.500" fill="#2b7cd3" stroke="none"/>
<rect x="629" y="689.300" width="18" height="5.400" fill="#41a5ee" stroke="none"/>
<rect x="629" y="700" width="18" height="5.400" fill="#185abd" stroke="none"/>
<rect x="629" y="705.400" width="18" height="5.400" fill="#103f91" stroke="none"/>
<rect x="623" y="693.800" width="12.500" height="12.500" rx="1.200" fill="#185abd" stroke="none"/>
<text x="629.250" y="703.300" font-family="Liberation Sans, sans-serif" font-size="9" font-weight="bold" fill="#fff" stroke="none" text-anchor="middle">W</text>
<!-- tray -->
<rect x="861.600" y="695" width="1.300" height="2" fill="#fff" stroke="none"/>
<path d="M893 703.200 L898.800 697 L904.600 703.200" stroke="#222" stroke-width="1.300"/>
<path d="M926 705.400 C921.500 705.400 921.500 700 925.300 699.600 C925.800 694.800 932.500 693.600 934 698 C938.800 697.400 939.800 705.400 935.500 705.400 Z" stroke="#333" stroke-width="1.200" fill="#cfcfd2"/>
<rect x="958.400" y="692" width="8" height="11.800" rx="2.300" fill="#0c0c0c" stroke="none"/>
<path d="M957.300 700 V702 C957.300 706.300 967.500 706.300 967.500 702 V700 M962.400 705.200 V707.400 M960.400 707.500 H964.400" stroke="#444" stroke-width=".9"/>
<rect x="987.500" y="696.700" width="14.300" height="7.600" stroke="#222" stroke-width="1.100"/>
<rect x="988.800" y="698" width="6.200" height="5" fill="#111" stroke="none"/>
<path d="M1002.800 699 V702" stroke="#222" stroke-width="1.200"/>
<g stroke="#333" stroke-width="1.100">
<path d="M1022 706.500 A11.500 11.500 0 0 1 1033.500 695"/>
<path d="M1025.600 706.500 A8 8 0 0 1 1033.600 698.500"/>
<path d="M1029.200 706.500 A4.400 4.400 0 0 1 1033.600 702.100"/>
</g>
<circle cx="1032.800" cy="706" r="1.100" fill="#222" stroke="none"/>
<path d="M1051.500 698 H1054.500 L1058.300 694.800 V706 L1054.500 702.800 H1051.500 Z" stroke="#333" stroke-width="1"/>
<path d="M1060.300 698 C1061.300 699.300 1061.300 701.500 1060.300 702.800 M1062.300 696.300 C1064.200 698.600 1064.200 702.200 1062.300 704.500" stroke="#555" stroke-width=".9"/>
<path d="M1064.500 695 C1067 698 1067 703 1064.500 706" stroke="#aaa" stroke-width=".8"/>
<path d="M1092.300 706.300 C1088.500 708 1087.300 703 1090.800 701.400 L1093.600 700 M1096 694.500 C1099.600 692.600 1101 697.400 1097.600 699.200 L1095 700.600 M1093.300 704.600 L1096.300 695.300 C1097 693.200 1099 694 1098.300 696 L1095.300 705 C1094.600 707 1092.600 706.400 1093.300 704.600 Z" stroke="#222" stroke-width="1"/>
<!-- notifications -->
<path d="M1239 692.600 H1254.500 V703.500 H1250 V706.800 L1246.600 703.500 H1239 Z" fill="#111" stroke="#111" stroke-width=".8"/>
<path d="M1241.500 695.500 H1252 M1241.500 698 H1252 M1241.500 700.500 H1252" stroke="#e8e8ee" stroke-width=".8"/>
<circle cx="1251.800" cy="704.300" r="3" fill="#e8e8ee" stroke="#111" stroke-width=".8"/>
<!-- udemy watermark -->
<text x="1226.500" y="709" font-family="Liberation Serif, serif" font-style="italic" font-size="19" fill="#fff" stroke="none" opacity=".6">U</text>
<text x="1241" y="709" font-family="Liberation Sans, sans-serif" font-size="11.500" font-weight="bold" fill="#fff" stroke="none" opacity=".5">demy</text>
</svg>

</body>
</html>
